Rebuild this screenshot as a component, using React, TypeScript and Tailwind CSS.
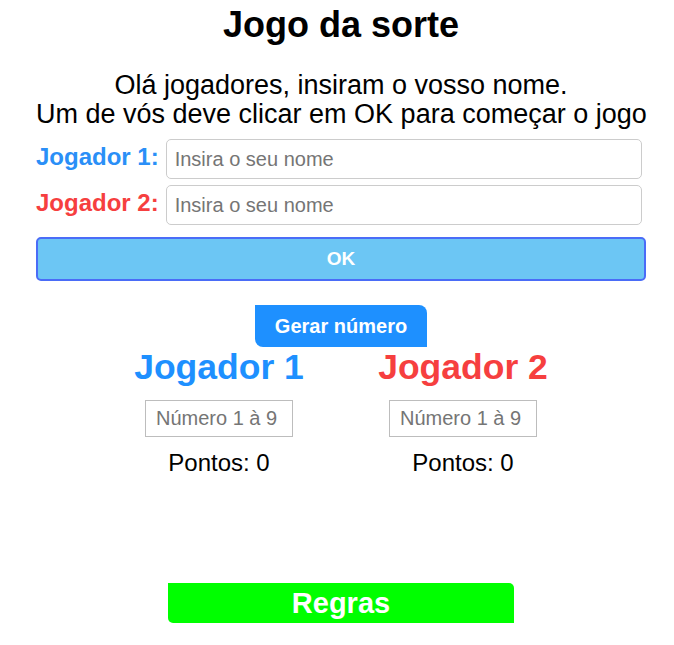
import React from "react";

export default function App() {
  const font = { fontFamily: '"Liberation Sans", Arial, sans-serif' };
  return (
    <div className="w-[674px] h-[645px] bg-white text-black overflow-hidden" style={font}>
      <div className="ml-[36px] w-[610px] flex flex-col">
        <h1 className="mt-[4px] text-center text-[36px] leading-[41px] font-bold">Jogo da sorte</h1>
        <p className="mt-[26px] text-center text-[27px] leading-[29px] whitespace-nowrap">
          Olá jogadores, insiram o vosso nome.
          <br />
          Um de vós deve clicar em OK para começar o jogo
        </p>
        <div className="mt-[10px] flex flex-col gap-[6px]">
          <div className="flex items-center gap-[7px] pr-[4px]">
            <label className="text-[24px] leading-[28px] font-bold text-[#2a8ff7] pb-[4px] whitespace-nowrap">Jogador 1:</label>
            <input
              className="flex-1 h-[40px] rounded-[5px] border border-[#cccccc] px-[8px] text-[20px] outline-none placeholder:text-[#757575]"
              placeholder="Insira o seu nome"
              style={font}
            />
          </div>
          <div className="flex items-center gap-[7px] pr-[4px]">
            <label className="text-[24px] leading-[28px] font-bold text-[#f63f3f] pb-[4px] whitespace-nowrap">Jogador 2:</label>
            <input
              className="flex-1 h-[40px] rounded-[5px] border border-[#cccccc] px-[8px] text-[20px] outline-none placeholder:text-[#757575]"
              placeholder="Insira o seu nome"
              style={font}
            />
          </div>
        </div>
        <button
          className="mt-[12px] h-[44px] w-full rounded-[5px] border-2 border-[#4a6cf7] bg-[#6cc6f4] text-white font-bold text-[19px]"
          style={font}
        >
          OK
        </button>
        <div className="mt-[24px] flex justify-center">
          <button
            className="h-[42px] px-[20px] bg-[#1e90ff] text-white font-bold text-[20px] rounded-tr-[8px] rounded-bl-[8px] rounded-tl-none rounded-br-none"
            style={font}
          >
            Gerar número
          </button>
        </div>
        <div className="flex justify-center">
          <div className="w-[244px] flex flex-col items-center">
            <h2 className="text-[35.5px] leading-[40px] font-bold text-[#1e90ff] whitespace-nowrap">Jogador 1</h2>
            <input
              className="mt-[13px] w-[148px] h-[37px] border border-[#bdbdbd] px-[10px] text-[20px] outline-none placeholder:text-[#757575]"
              placeholder="Número 1 à 9"
              style={font}
            />
            <p className="mt-[12px] text-[24px] leading-[28px]">Pontos: 0</p>
          </div>
          <div className="w-[244px] flex flex-col items-center">
            <h2 className="text-[35.5px] leading-[40px] font-bold text-[#f63f3f] whitespace-nowrap">Jogador 2</h2>
            <input
              className="mt-[13px] w-[148px] h-[37px] border border-[#bdbdbd] px-[10px] text-[20px] outline-none placeholder:text-[#757575]"
              placeholder="Número 1 à 9"
              style={font}
            />
            <p className="mt-[12px] text-[24px] leading-[28px]">Pontos: 0</p>
          </div>
        </div>
        <div className="mt-[106px] flex justify-center">
          <button
            className="w-[346px] h-[40px] bg-[#00ff00] text-white font-bold text-[29px] leading-[40px] rounded-tr-[5px] rounded-bl-[5px]"
            style={font}
          >
            Regras
          </button>
        </div>
      </div>
    </div>
  );
}
